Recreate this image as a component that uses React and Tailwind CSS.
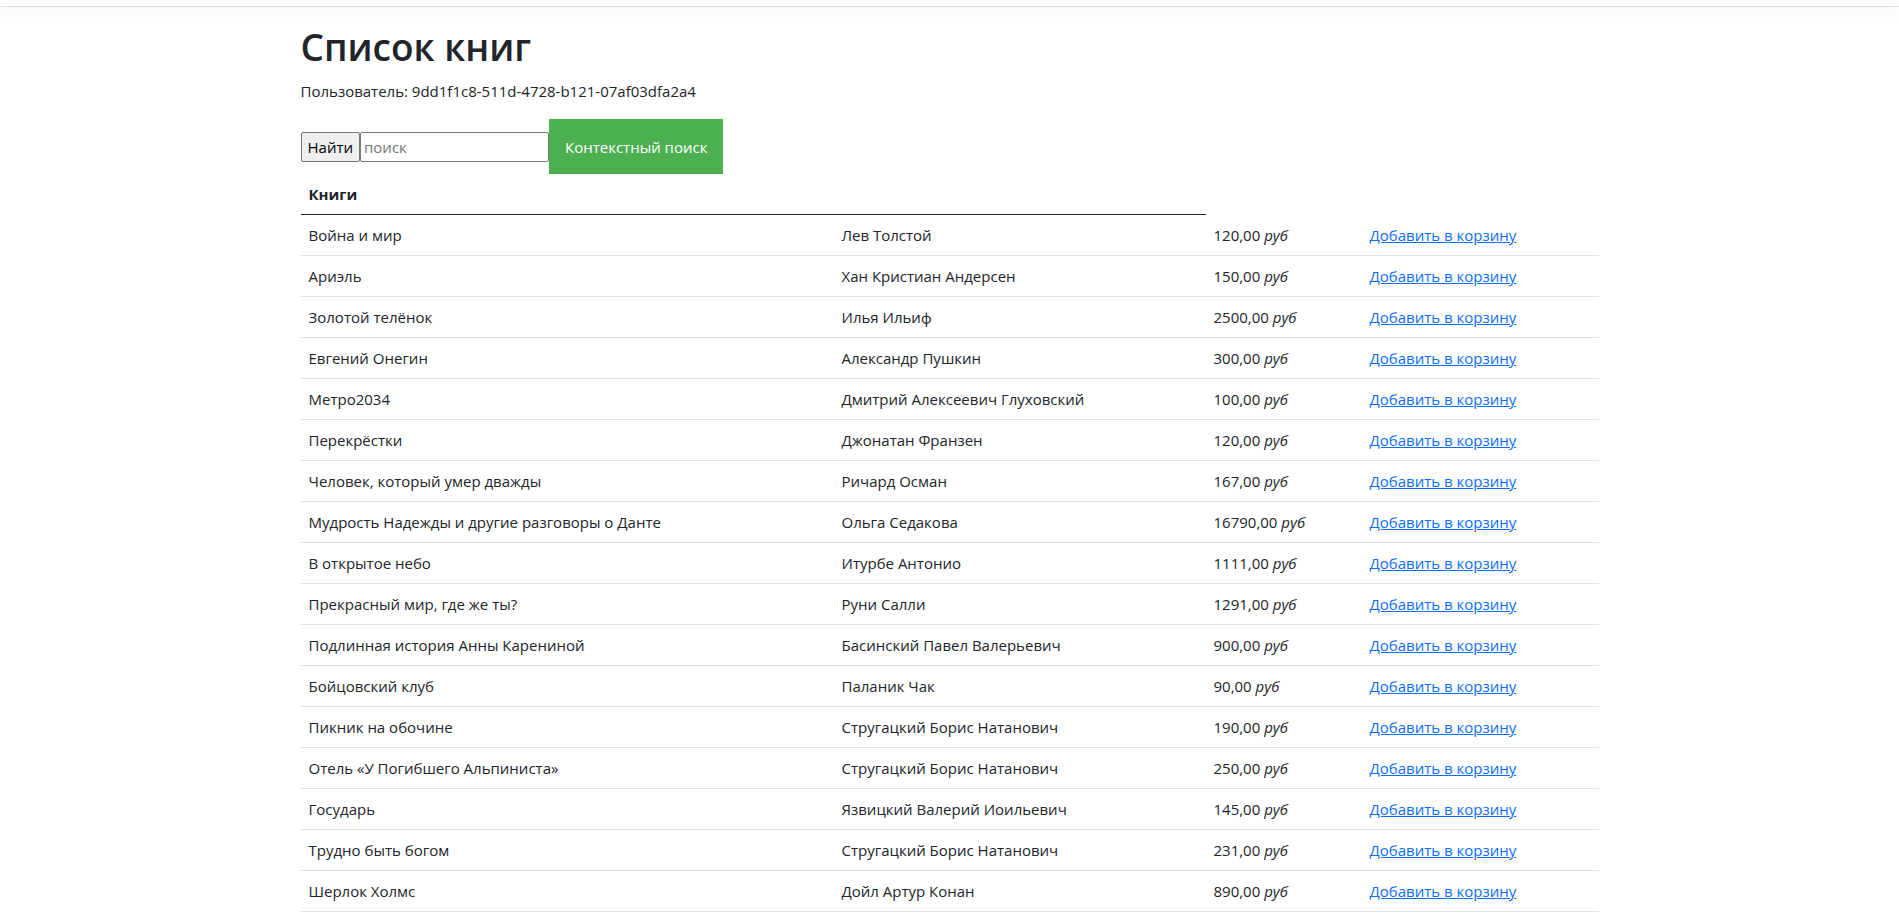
import React from 'react';

const books = [
  ['Война и мир', 'Лев Толстой', '120,00'],
  ['Ариэль', 'Хан Кристиан Андерсен', '150,00'],
  ['Золотой телёнок', 'Илья Ильиф', '2500,00'],
  ['Евгений Онегин', 'Александр Пушкин', '300,00'],
  ['Метро2034', 'Дмитрий Алексеевич Глуховский', '100,00'],
  ['Перекрёстки', 'Джонатан Франзен', '120,00'],
  ['Человек, который умер дважды', 'Ричард Осман', '167,00'],
  ['Мудрость Надежды и другие разговоры о Данте', 'Ольга Седакова', '16790,00'],
  ['В открытое небо', 'Итурбе Антонио', '1111,00'],
  ['Прекрасный мир, где же ты?', 'Руни Салли', '1291,00'],
  ['Подлинная история Анны Карениной', 'Басинский Павел Валерьевич', '900,00'],
  ['Бойцовский клуб', 'Паланик Чак', '90,00'],
  ['Пикник на обочине', 'Стругацкий Борис Натанович', '190,00'],
  ['Отель «У Погибшего Альпиниста»', 'Стругацкий Борис Натанович', '250,00'],
  ['Государь', 'Язвицкий Валерий Иоильевич', '145,00'],
  ['Трудно быть богом', 'Стругацкий Борис Натанович', '231,00'],
  ['Шерлок Холмс', 'Дойл Артур Конан', '890,00'],
];

export default function App() {
  return (
    <div className="min-h-screen bg-white text-[#212529] text-[15px] leading-6 font-['Open_Sans','Noto_Sans',sans-serif]">
      <header className="h-[7px] border-b border-[#dfdbe8] shadow-[0_4px_14px_rgba(0,0,0,0.06)] mb-4"></header>

      <main className="max-w-[1322px] mx-auto px-3">
        <h1 className="text-[37px] leading-[48px] font-semibold mb-2">Список книг</h1>
        <p className="mb-4">Пользователь: 9dd1f1c8-511d-4728-b121-07af03dfa2a4</p>

        <div className="flex items-center">
          <button className="h-[30px] px-[6px] bg-[#efefef] border border-[#767676] rounded-[2px] text-black">
            Найти
          </button>
          <input
            placeholder="поиск"
            className="h-[30px] w-[189px] px-[3px] border border-[#767676] rounded-[2px] placeholder:text-[#757575] outline-none"
          />
          <button className="h-[55px] px-4 bg-[#4caf50] text-white">
            Контекстный поиск
          </button>
        </div>

        <table className="w-full table-fixed border-collapse">
          <colgroup>
            <col className="w-[533px]" />
            <col className="w-[372px]" />
            <col className="w-[156px]" />
            <col />
          </colgroup>
          <thead>
            <tr>
              <th className="text-left font-bold p-2 border-b border-[#212529]">Книги</th>
              <th className="p-2 border-b border-[#212529]"></th>
            </tr>
          </thead>
          <tbody>
            {books.map(([title, author, price]) => (
              <tr key={title} className="border-b border-[#dee2e6]">
                <td className="p-2">{title}</td>
                <td className="p-2">{author}</td>
                <td className="p-2">{price} <i>руб</i></td>
                <td className="p-2">
                  <a href="#" className="text-[#0d6efd] underline">Добавить в корзину</a>
                </td>
              </tr>
            ))}
          </tbody>
        </table>
      </main>
    </div>
  );
}
